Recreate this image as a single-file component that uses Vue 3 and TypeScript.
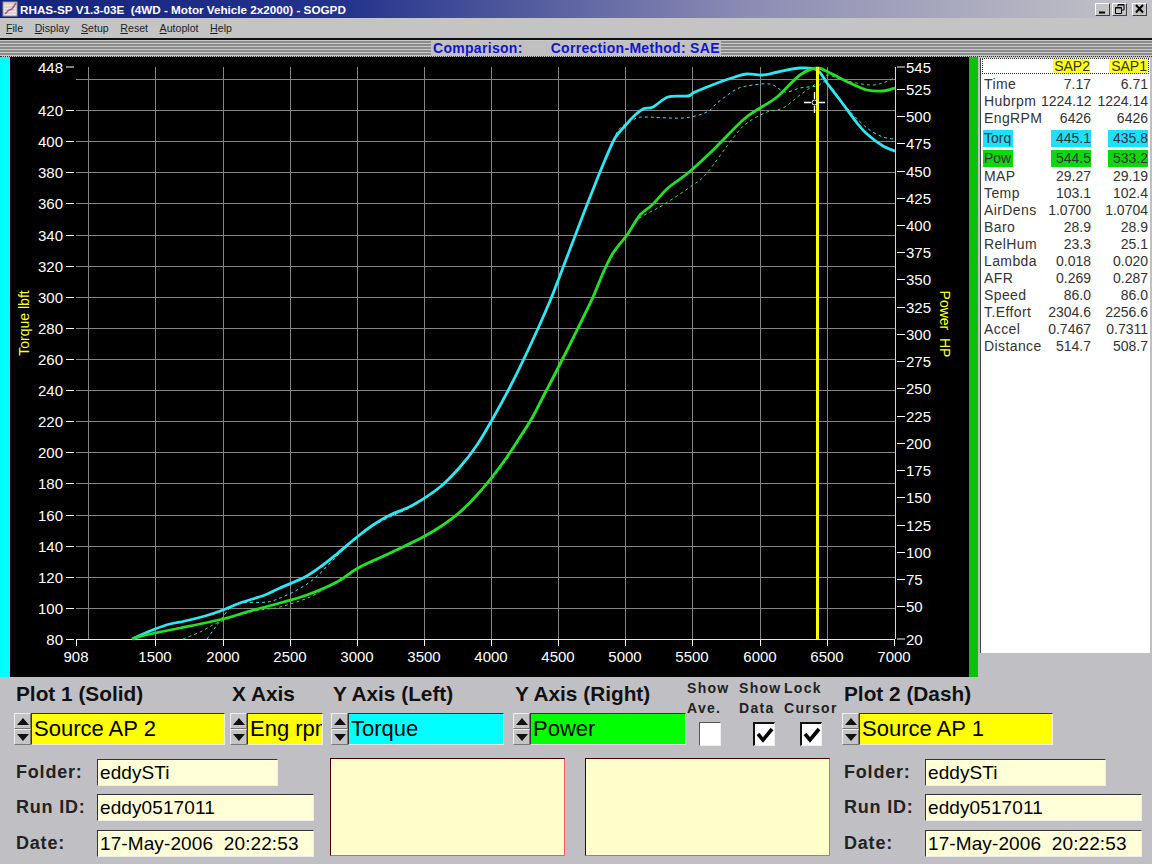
<template>
  <div class="window">
    <div class="titlebar">
      <svg class="app-icon" width="16" height="16" viewBox="0 0 16 16">
        <rect x="1" y="1" width="14" height="14" fill="#efe8dc" stroke="#9c9488" />
        <path d="M1 3H15M1 6H15M1 9H15M1 12H15" stroke="#c8bcc8" />
        <path d="M3 13 L7 9 L10 8 L14 2" fill="none" stroke="#a85890" stroke-width="1.6" />
      </svg>
      <span class="title-text">{{ title }}</span>
      <div class="win-buttons">
        <button class="win-btn"><svg width="13" height="12" viewBox="0 0 13 12"><path d="M3 9.5H9" stroke="#000" stroke-width="2" /></svg></button>
        <button class="win-btn"><svg width="13" height="12" viewBox="0 0 13 12"><path d="M5 3.5V1.5H11V7H9M2.5 4.5H8.5V10.5H2.5Z M5 2H11 M2.5 5H8.5" fill="none" stroke="#000" /></svg></button>
        <button class="win-btn close"><svg width="13" height="12" viewBox="0 0 13 12"><path d="M3 2L10 9.5M10 2L3 9.5" stroke="#000" stroke-width="2" /></svg></button>
      </div>
    </div>

    <div class="menubar">
      <span v-for="m in menus" :key="m" class="menu-item"><u>{{ m[0] }}</u>{{ m.slice(1) }}</span>
    </div>

    <div class="stripes">
      <div class="comparison">
        <span>Comparison:</span>
        <span>Correction-Method: SAE</span>
      </div>
    </div>

    <div class="main">
      <div class="strip cyan" />
      <svg class="chart" width="959" height="620" viewBox="10 57 959 620">
        <rect x="10" y="57" width="959" height="620" fill="#000" />
        <g stroke="#858585" stroke-width="1">
          <line v-for="y in gridY" :key="y" x1="76" :y1="y" x2="895" :y2="y" />
          <line v-for="x in gridX" :key="x" :x1="x + 0.5" y1="67" :x2="x + 0.5" y2="639" />
        </g>
        <line x1="76" y1="639.5" x2="895" y2="639.5" stroke="#e8e8e8" stroke-width="1.2" />
        <line x1="895.5" y1="67" x2="895.5" y2="639" stroke="#d8d8d8" />

        <g class="axis-text">
          <g v-for="t in leftTicks" :key="t.label">
            <line x1="66" :y1="t.y" x2="74" :y2="t.y" stroke="#fff" />
            <text x="63" :y="t.y + 5.5" text-anchor="end">{{ t.label }}</text>
          </g>
          <g v-for="t in rightTicks" :key="t.label">
            <line x1="897" :y1="t.y" x2="905" :y2="t.y" stroke="#fff" />
            <text x="906" :y="t.y + 5.5">{{ t.label }}</text>
          </g>
          <g v-for="t in bottomTicks" :key="t.label">
            <line :x1="t.x + 0.5" y1="640" :x2="t.x + 0.5" y2="646" stroke="#fff" />
            <text :x="t.x" y="662" text-anchor="middle">{{ t.label }}</text>
          </g>
        </g>

        <text class="axis-title" transform="translate(29 323) rotate(-90)" text-anchor="middle">Torque lbft</text>
        <text class="axis-title" transform="translate(940 324) rotate(90)" text-anchor="middle">Power&#160; HP</text>

        <path :d="smooth(torqDash)" class="dash" stroke="#3fe0f0" />
        <path :d="smooth(powDash)" class="dash" stroke="#39e039" />
        <path :d="smooth(torqSolid)" class="solid" stroke="#2ce8f4" />
        <path :d="smooth(powSolid)" class="solid" stroke="#22e022" />

        <line x1="817.5" y1="67" x2="817.5" y2="639" stroke="#ffff00" stroke-width="3" />
        <g stroke="#fff" fill="none">
          <path d="M804 102.5H811M818 102.5H825M814.5 92V99M814.5 106V113" stroke-width="1.4" />
          <circle cx="814.5" cy="102.5" r="2.5" />
        </g>
      </svg>
      <div class="strip green" />
      <div class="side">
        <div class="stats">
          <div class="stats-head">
            <span class="tag first-tag">SAP2</span>
            <span class="tag second-tag">SAP1</span>
          </div>
          <div v-for="r in stats" :key="r.name" class="stat-row" :class="r.hl">
            <span class="stat-name">{{ r.name }}</span>
            <span class="stat-val"><i>{{ r.a }}</i></span>
            <span class="stat-val"><i>{{ r.b }}</i></span>
          </div>
        </div>
      </div>
    </div>

    <div class="controls">
      <div class="pick-row">
        <div v-for="p in pickers" :key="p.title" class="picker" :style="{ width: p.width + 'px' }">
          <div class="pick-title">{{ p.title }}</div>
          <div class="pick-line">
            <div class="spinner">
              <span class="spin up" />
              <span class="spin down" />
            </div>
            <div class="pick-field" :style="{ background: p.color, width: p.field + 'px' }">{{ p.value }}</div>
          </div>
        </div>
        <div class="checks">
          <div v-for="c in checks" :key="c.cls" class="check" :class="c.cls">
            <div class="check-label">{{ c.top }}<br />{{ c.bottom }}</div>
            <div class="check-box">
              <svg v-if="c.on" width="18" height="18" viewBox="0 0 18 18">
                <path d="M2 8L7 14L16 3" fill="none" stroke="#000" stroke-width="3.6" />
              </svg>
            </div>
          </div>
        </div>
        <div class="picker">
          <div class="pick-title">Plot 2 (Dash)</div>
          <div class="pick-line">
            <div class="spinner">
              <span class="spin up" />
              <span class="spin down" />
            </div>
            <div class="pick-field plot2">Source AP 1</div>
          </div>
        </div>
      </div>

      <div class="info-row">
        <div class="info">
          <div v-for="f in infoFields" :key="f.label" class="info-line">
            <span class="info-label">{{ f.label }}</span>
            <span class="info-field" :style="{ width: f.width + 'px' }">{{ f.value }}</span>
          </div>
        </div>
        <div class="note note-a" />
        <div class="note note-b" />
        <div class="info">
          <div v-for="f in infoFields" :key="f.label" class="info-line">
            <span class="info-label">{{ f.label }}</span>
            <span class="info-field" :style="{ width: f.width + 'px' }">{{ f.value }}</span>
          </div>
        </div>
      </div>
    </div>
  </div>
</template>

<script setup lang="ts">
type Pt = [number, number]

const title = 'RHAS-SP V1.3-03E  (4WD - Motor Vehicle 2x2000) - SOGPD'
const menus = ['File', 'Display', 'Setup', 'Reset', 'Autoplot', 'Help']

const yLeft = (v: number) => 639 - (v - 80) * 1.5555
const yRight = (v: number) => 639 - (v - 20) * 1.0895

const gridY: number[] = []
for (let v = 100; v <= 440; v += 20) gridY.push(Math.round(yLeft(v)) + 0.5)
const gridX = [88, 155, 223, 290, 357, 424, 491, 558, 625, 692, 760, 827]

const leftTicks: { label: string; y: number }[] = [{ label: '448', y: 67 }]
for (let v = 420; v >= 80; v -= 20) leftTicks.push({ label: String(v), y: Math.round(yLeft(v)) + 0.5 })

const rightTicks: { label: string; y: number }[] = [{ label: '545', y: 67 }]
for (let v = 525; v >= 50; v -= 25) rightTicks.push({ label: String(v), y: Math.round(yRight(v)) + 0.5 })
rightTicks.push({ label: '20', y: 639 })

const bottomTicks = [
  { label: '908', x: 76 },
  { label: '1500', x: 155 },
  { label: '2000', x: 223 },
  { label: '2500', x: 290 },
  { label: '3000', x: 357 },
  { label: '3500', x: 424 },
  { label: '4000', x: 491 },
  { label: '4500', x: 558 },
  { label: '5000', x: 625 },
  { label: '5500', x: 692 },
  { label: '6000', x: 760 },
  { label: '6500', x: 827 },
  { label: '7000', x: 894 },
]

const torqSolid: Pt[] = [
  [132, 639], [143, 634], [155, 629], [170, 624], [185, 621], [205, 616], [223, 610], [240, 603], [265, 595],
  [280, 588], [305, 577], [323, 565], [338, 553], [357, 537], [373, 525], [390, 515], [413, 505], [440, 487],
  [460, 467], [477, 445], [492, 420], [510, 387], [530, 346], [550, 301], [567, 257], [583, 215], [598, 177],
  [605, 160], [615, 138], [625, 126], [633, 117], [643, 109], [653, 107], [668, 97], [688, 96], [695, 92],
  [720, 82], [735, 77], [747, 74], [762, 75], [778, 72], [800, 68], [817, 70], [827, 83], [840, 100], [857, 123],
  [867, 134], [883, 146], [895, 151],
]
const powSolid: Pt[] = [
  [132, 639], [142, 636], [155, 633], [180, 628], [223, 619], [250, 611], [280, 603], [307, 595], [337, 582],
  [358, 568], [390, 553], [423, 537], [443, 525], [460, 512], [477, 495], [492, 477], [507, 457], [520, 437],
  [532, 418], [545, 393], [558, 368], [577, 330], [593, 297], [603, 273], [613, 253], [627, 235], [640, 215],
  [652, 205], [668, 188], [688, 173], [710, 153], [743, 120], [760, 108], [777, 97], [800, 75], [817, 68],
  [830, 73], [850, 83], [867, 90], [883, 91], [895, 88],
]
const torqDash: Pt[] = [
  [207, 639], [217, 625], [230, 608], [240, 603], [267, 602], [280, 598], [297, 590], [315, 578], [337, 556],
  [357, 538], [373, 526], [390, 517], [413, 506], [440, 488], [460, 468], [477, 446], [492, 421], [510, 388],
  [530, 347], [550, 302], [575, 236], [598, 178], [615, 136], [625, 124], [633, 120], [643, 117], [683, 118],
  [707, 112], [717, 103], [735, 90], [747, 86], [770, 84], [785, 92], [800, 88], [817, 86], [827, 83], [847, 108],
  [867, 128], [883, 137], [895, 139],
]
const powDash: Pt[] = [
  [183, 639], [200, 632], [217, 623], [240, 615], [260, 610], [280, 607], [310, 597], [330, 585], [358, 569],
  [390, 554], [423, 538], [443, 526], [460, 513], [477, 496], [492, 479], [507, 459], [520, 439], [532, 420],
  [545, 395], [558, 370], [577, 332], [593, 299], [603, 275], [613, 255], [625, 238], [637, 220], [663, 205],
  [693, 185], [707, 173], [733, 138], [747, 123], [767, 112], [783, 108], [800, 95], [817, 83], [827, 75],
  [843, 80], [873, 85], [895, 78],
]

// catmull-rom through the sampled points, so the traces have no corners
const smooth = (list: Pt[]) => {
  let d = `M${list[0][0]} ${list[0][1]}`
  for (let i = 0; i < list.length - 1; i++) {
    const p0 = list[Math.max(i - 1, 0)]
    const p1 = list[i]
    const p2 = list[i + 1]
    const p3 = list[Math.min(i + 2, list.length - 1)]
    const c1x = p1[0] + (p2[0] - p0[0]) / 6
    const c1y = p1[1] + (p2[1] - p0[1]) / 6
    const c2x = p2[0] - (p3[0] - p1[0]) / 6
    const c2y = p2[1] - (p3[1] - p1[1]) / 6
    d += `C${c1x.toFixed(1)} ${c1y.toFixed(1)} ${c2x.toFixed(1)} ${c2y.toFixed(1)} ${p2[0]} ${p2[1]}`
  }
  return d
}

const stats = [
  { name: 'Time', a: '7.17', b: '6.71' },
  { name: 'Hubrpm', a: '1224.12', b: '1224.14' },
  { name: 'EngRPM', a: '6426', b: '6426' },
  { name: 'Torq', a: '445.1', b: '435.8', hl: 'hl hl-cyan' },
  { name: 'Pow', a: '544.5', b: '533.2', hl: 'hl hl-green' },
  { name: 'MAP', a: '29.27', b: '29.19' },
  { name: 'Temp', a: '103.1', b: '102.4' },
  { name: 'AirDens', a: '1.0700', b: '1.0704' },
  { name: 'Baro', a: '28.9', b: '28.9' },
  { name: 'RelHum', a: '23.3', b: '25.1' },
  { name: 'Lambda', a: '0.018', b: '0.020' },
  { name: 'AFR', a: '0.269', b: '0.287' },
  { name: 'Speed', a: '86.0', b: '86.0' },
  { name: 'T.Effort', a: '2304.6', b: '2256.6' },
  { name: 'Accel', a: '0.7467', b: '0.7311' },
  { name: 'Distance', a: '514.7', b: '508.7' },
]

const pickers = [
  { title: 'Plot 1 (Solid)', value: 'Source AP 2', color: '#ffff00', width: 216, field: 194 },
  { title: 'X Axis', value: 'Eng rpm', color: '#ffff00', width: 101, field: 76 },
  { title: 'Y Axis (Left)', value: 'Torque', color: '#00ffff', width: 182, field: 156 },
  { title: 'Y Axis (Right)', value: 'Power', color: '#00ff00', width: 174, field: 156 },
]

const checks = [
  { top: 'Show', bottom: 'Ave.', on: false, cls: 'c-ave' },
  { top: 'Show', bottom: 'Data', on: true, cls: 'c-data' },
  { top: 'Lock', bottom: 'Cursor', on: true, cls: 'c-lock' },
]

const infoFields = [
  { label: 'Folder:', value: 'eddySTi', width: 181 },
  { label: 'Run ID:', value: 'eddy0517011', width: 217 },
  { label: 'Date:', value: '17-May-2006  20:22:53', width: 217 },
]
</script>

<style>
html,
body {
  margin: 0;
  background: #c0c0c0;
}
</style>

<style scoped>
.window {
  width: 1152px;
  height: 864px;
  overflow: hidden;
  display: flex;
  flex-direction: column;
  background: #c0c0c4;
  font-family: 'Liberation Sans', Arial, sans-serif;
  color: #000;
}

.titlebar {
  height: 18px;
  flex: none;
  display: flex;
  align-items: center;
  padding-left: 2px;
  background: linear-gradient(90deg, #14247c 0%, #24348c 30%, #8c8cb4 65%, #c4c4c8 100%);
}

.app-icon {
  flex: none;
  margin-right: 2px;
}

.title-text {
  color: #fff;
  font: bold 11.7px 'Liberation Sans', sans-serif;
  white-space: pre;
}

.win-buttons {
  margin-left: auto;
  margin-right: 5px;
  display: flex;
  gap: 2px;
}

.win-btn {
  width: 15px;
  height: 13px;
  padding: 0;
  display: flex;
  align-items: center;
  justify-content: center;
  background: #c4c4c4;
  border: 1px solid;
  border-color: #fff #404040 #404040 #fff;
}

.win-btn.close {
  margin-left: 3px;
}

.menubar {
  height: 20px;
  flex: none;
  display: flex;
  align-items: center;
  padding-left: 6px;
  gap: 11.6px;
  font: 10.6px 'Liberation Sans', sans-serif;
  color: #222;
  background: #c4c4c4;
}

.stripes {
  height: 19px;
  flex: none;
  box-sizing: border-box;
  border-top: 2px solid #111;
  border-bottom: 1px dotted #333;
  display: flex;
  justify-content: center;
  background: repeating-linear-gradient(180deg, #c8c8c8 0 1px, #8c8c8c 1px 3px);
}

.comparison {
  width: 290px;
  height: 15px;
  margin-top: 1px;
  display: flex;
  gap: 28px;
  box-sizing: border-box;
  padding-left: 2px;
  background: #c0c0c0;
  color: #1414d0;
  font-weight: bold;
  font-size: 14px;
  letter-spacing: 0.3px;
  line-height: 14px;
  white-space: nowrap;
}

.main {
  height: 620px;
  flex: none;
  display: flex;
}

.strip {
  flex: none;
}

.strip.cyan {
  width: 10px;
  background: #00ffff;
}

.strip.green {
  width: 9px;
  background: #0cc00c;
}

.chart {
  flex: none;
  display: block;
}

.axis-text text {
  fill: #fff;
  font: 15px 'Liberation Sans', sans-serif;
}

.axis-title {
  fill: #ffff33;
  font: 14px 'Liberation Sans', sans-serif;
}

.solid {
  fill: none;
  stroke-width: 2.8;
  stroke-linejoin: round;
}

.dash {
  fill: none;
  stroke-width: 1;
  stroke-dasharray: 3 3;
}

.side {
  flex: 1;
  padding: 1px 2px 0 2px;
  min-width: 0;
}

.stats {
  height: 595px;
  box-sizing: border-box;
  padding: 0 1px;
  background: #fff;
  border-left: 1px solid #444;
  font-size: 14px;
  color: #333;
}

.stats-head {
  height: 16px;
  box-sizing: border-box;
  border: 1px dotted #333;
  margin-bottom: 2px;
  display: flex;
  font-size: 14px;
  line-height: 14px;
  color: #333;
}

.tag {
  background: #ffff1a;
  height: 14px;
  text-align: right;
}

.first-tag {
  width: 37px;
  margin-left: 70px;
}

.second-tag {
  width: 38px;
  margin-left: 19px;
}

.stat-row {
  height: 17px;
  display: grid;
  grid-template-columns: 57px 50px 57px;
  align-items: center;
  padding-left: 2px;
  white-space: nowrap;
  line-height: 17px;
}

.stat-row.hl {
  height: 20px;
}

.stat-row:not(.hl) + .hl {
  margin-top: 1px;
}

.stat-name {
  letter-spacing: 0.4px;
}

.stat-val {
  text-align: right;
}

.stat-val i {
  font-style: normal;
}

.hl .stat-name {
  justify-self: start;
  margin-left: -1px;
  padding: 0 2px 0 1px;
  letter-spacing: 0;
  height: 17px;
}

.hl .stat-val i {
  display: inline-block;
  width: 40px;
  height: 17px;
  text-align: right;
}

.hl-cyan .stat-name,
.hl-cyan .stat-val i {
  background: #1ce0fc;
}

.hl-green .stat-name,
.hl-green .stat-val i {
  background: #0cd80c;
}

.controls {
  flex: 1;
  padding-left: 14px;
}

.pick-row {
  display: flex;
  height: 71px;
  box-sizing: border-box;
  padding-top: 3px;
}

.picker {
  flex: none;
}

.pick-title {
  height: 33px;
  padding-left: 2px;
  box-sizing: border-box;
  font-size: 20.8px;
  font-weight: bold;
  line-height: 28px;
  color: #111;
  white-space: nowrap;
}

.pick-line {
  display: flex;
  height: 32px;
}

.spinner {
  width: 17px;
  flex: none;
  display: flex;
  flex-direction: column;
}

.spin {
  flex: 1;
  display: flex;
  align-items: center;
  justify-content: center;
  box-sizing: border-box;
  background: #c4c4c4;
  border: 1px solid;
  border-color: #eee #777 #777 #eee;
}

.spin::before {
  content: '';
  border-left: 6px solid transparent;
  border-right: 6px solid transparent;
}

.spin.up::before {
  border-bottom: 7px solid #111;
}

.spin.down::before {
  border-top: 7px solid #111;
}

.pick-field {
  box-sizing: border-box;
  border: 1px solid;
  border-color: #333 #eee #eee #333;
  padding-left: 2px;
  font-size: 22px;
  line-height: 29px;
  white-space: nowrap;
  overflow: hidden;
}

.pick-field.plot2 {
  width: 194px;
  background: #ffff00;
}

.checks {
  flex: none;
  width: 155px;
  display: flex;
}

.check {
  flex: none;
  font-size: 14px;
}

.c-ave {
  width: 52px;
}

.c-data {
  width: 45px;
}

.c-lock {
  width: 58px;
}

.check-label {
  font-weight: bold;
  letter-spacing: 1.3px;
  line-height: 20px;
  height: 44px;
  margin-top: -2px;
  color: #222;
  white-space: nowrap;
}

.check-box {
  width: 22px;
  height: 24px;
  box-sizing: border-box;
  background: #fff;
  border: 1px solid;
  border-color: #555 #eee #eee #555;
  display: flex;
  align-items: center;
  justify-content: center;
}

.c-ave .check-box {
  margin-left: 12px;
}

.c-data .check-box {
  margin-left: 14px;
  border-width: 2px 1px 1px 2px;
  border-color: #111 #eee #eee #111;
}

.c-lock .check-box {
  margin-left: 16px;
  border-width: 2px 1px 1px 2px;
  border-color: #111 #eee #eee #111;
}

.info-row {
  display: flex;
  padding-top: 10px;
  padding-left: 2px;
}

.info {
  width: 314px;
  flex: none;
  display: flex;
  flex-direction: column;
  gap: 8px;
  padding-top: 1px;
}

.info-line {
  display: flex;
  align-items: center;
  height: 27px;
}

.info-line:last-child {
  margin-top: 1px;
}

.info-label {
  width: 81px;
  flex: none;
  font-size: 18px;
  font-weight: bold;
  letter-spacing: 0.8px;
  color: #222;
}

.info-field {
  height: 27px;
  box-sizing: border-box;
  border: 1px solid;
  border-color: #333 #eee #eee #333;
  background: #ffffd8;
  padding-left: 2px;
  font-size: 19px;
  line-height: 25px;
  letter-spacing: 0.1px;
  white-space: pre;
}

.note {
  flex: none;
  height: 98px;
  box-sizing: border-box;
  background: #ffffcc;
  border: 1px solid;
  border-color: #400000 #f06060 #f06060 #400000;
}

.note-a {
  width: 235px;
  margin-right: 20px;
}

.note-b {
  width: 245px;
  margin-right: 14px;
}
</style>
